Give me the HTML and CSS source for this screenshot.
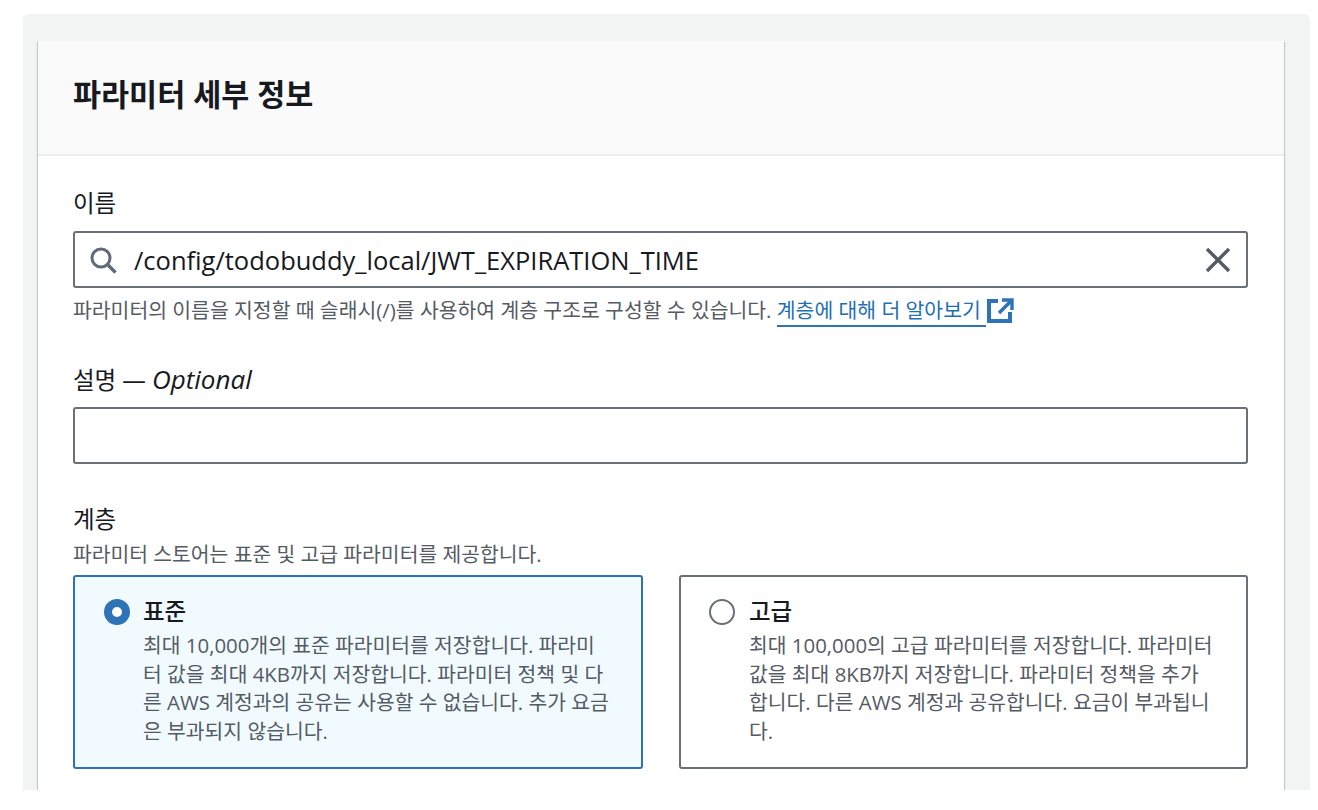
FILE: index.html
```html
<!DOCTYPE html>
<html lang="ko">
<head>
    <meta charset="UTF-8">
    <meta name="viewport" content="width=device-width, initial-scale=1.0">
    <title>파라미터 세부 정보</title>
    <link rel="stylesheet" href="styles.css">
</head>
<body>
    <div class="panel">
        <div class="card">
            <div class="card-header">
                <h2 class="card-title">파라미터 세부 정보</h2>
            </div>
            <div class="card-body">
                <div class="form-field field-name">
                    <div class="label">이름</div>
                    <div class="input input-search">
                        <svg class="icon-search" width="28" height="28" viewBox="0 0 28 28" fill="none">
                            <circle cx="12" cy="12" r="9" stroke="#5f6b7a" stroke-width="3"/>
                            <path d="M18 18l8.500 8.500" stroke="#5f6b7a" stroke-width="3.400"/>
                        </svg>
                        <span class="input-value">/config/todobuddy_local/JWT_EXPIRATION_TIME</span>
                        <svg class="icon-clear" width="28" height="28" viewBox="0 0 28 28" fill="none">
                            <path d="M3 3l22 22M25 3L3 25" stroke="#545b64" stroke-width="3.400"/>
                        </svg>
                    </div>
                    <div class="hint hint-name">파라미터의 이름을 지정할 때 슬래시(/)를 사용하여 계층 구조로 구성할 수 있습니다. <a class="link" href="#">계층에 대해 더 알아보기 </a><svg class="icon-external" width="28" height="26" viewBox="0 0 28 26" fill="none">
                            <path d="M12 3H3v20h21v-9" stroke="#2e73b8" stroke-width="4"/>
                            <path d="M13 15L25 3M16 2h10v10" stroke="#2e73b8" stroke-width="3.400"/>
                        </svg>
                    </div>
                </div>

                <div class="form-field field-desc">
                    <div class="label">설명 — <em>Optional</em></div>
                    <div class="input"></div>
                </div>

                <div class="form-field field-tier">
                    <div class="label label-tier">계층</div>
                    <div class="hint hint-tier">파라미터 스토어는 표준 및 고급 파라미터를 제공합니다.</div>
                    <div class="tiles">
                        <div class="tile tile-selected">
                            <span class="radio radio-on"></span>
                            <div class="tile-text">
                                <div class="tile-title">표준</div>
                                <div class="tile-desc">최대 10,000개의 표준 파라미터를 저장합니다. 파라미<br>터 값을 최대 4KB까지 저장합니다. 파라미터 정책 및 다<br>른 AWS 계정과의 공유는 사용할 수 없습니다. 추가 요금<br>은 부과되지 않습니다.</div>
                            </div>
                        </div>
                        <div class="tile">
                            <span class="radio"></span>
                            <div class="tile-text">
                                <div class="tile-title">고급</div>
                                <div class="tile-desc">최대 100,000의 고급 파라미터를 저장합니다. 파라미터<br>값을 최대 8KB까지 저장합니다. 파라미터 정책을 추가<br>합니다. 다른 AWS 계정과 공유합니다. 요금이 부과됩니<br>다.</div>
                            </div>
                        </div>
                    </div>
                </div>
            </div>
        </div>
    </div>
</body>
</html>
```

FILE: styles.css
```css
html, body {
    height: 100%;
}
body {
    margin: 0;
    background: #fff;
    color: #16191f;
    font-family: "Open Sans", "Noto Sans CJK KR", sans-serif;
    overflow: hidden;
}
.panel {
    height: 776px;
    margin: 14px 8px 0 23px;
    padding: 27px 26px 0 15px;
    box-sizing: border-box;
    background: #f2f3f3;
    border-radius: 6px 6px 0 0;
    overflow: hidden;
}
.card {
    background: #fff;
    height: 780px;
    box-shadow: 0 1px 1px 0 rgba(0, 28, 36, 0.3), 1px 1px 1px 0 rgba(0, 28, 36, 0.15), -1px 1px 1px 0 rgba(0, 28, 36, 0.15);
}
.card-header {
    height: 115px;
    box-sizing: border-box;
    padding: 32px 35px 0;
    background: #fafafa;
    border-bottom: 2px solid #eaeded;
}
.card-title {
    margin: 0;
    font-size: 30.500px;
    line-height: 42px;
    font-weight: 700;
}
.card-body {
    padding: 30px 36px 0 35px;
}
.label {
    font-size: 23.500px;
    line-height: 34px;
    margin-bottom: 11px;
}
.label em {
    font-style: italic;
    font-size: 26px;
}
.label-tier {
    margin-bottom: 0;
}
.input {
    height: 57px;
    box-sizing: border-box;
    border: 2px solid #687078;
    border-radius: 3px;
    display: flex;
    align-items: center;
}
.input-search {
    padding: 0 14px;
}
.icon-search {
    flex: none;
}
.input-value {
    flex: 1;
    margin-left: 17px;
    font-size: 25.500px;
}
.icon-clear {
    flex: none;
}
.hint {
    color: #545b64;
    font-size: 20.450px;
    line-height: 30px;
}
.hint-name {
    margin-top: 7px;
}
.link {
    color: #1f6fb5;
    text-decoration: none;
    border-bottom: 2px solid #2e73b8;
    padding-bottom: 1px;
}
.icon-external {
    margin-left: 0;
    vertical-align: -6px;
}
.field-desc {
    margin-top: 37px;
}
.field-desc .label {
    margin-bottom: 10px;
}
.field-tier {
    margin-top: 38px;
}
.hint-tier {
    margin-top: 3px;
    margin-bottom: 6px;
    font-size: 20.400px;
}
.tiles {
    display: grid;
    grid-template-columns: 570px 569px;
    column-gap: 36px;
}
.tile {
    height: 194px;
    box-sizing: border-box;
    border: 2px solid #687078;
    border-radius: 3px;
    padding: 20px 10px 0 28px;
    display: flex;
}
.tile-selected {
    background: #f1faff;
    border-color: #2e73b8;
}
.radio {
    flex: none;
    width: 26px;
    height: 26px;
    box-sizing: border-box;
    border: 2px solid #687078;
    border-radius: 50%;
    margin-top: 2px;
    background: #fff;
}
.radio-on {
    border: 8px solid #2e73b8;
    margin-left: 1px;
    margin-right: -1px;
}
.tile-text {
    margin-left: 14px;
}
.tile-title {
    font-size: 23.500px;
    line-height: 29px;
    font-weight: 500;
    margin-bottom: 5px;
}
.tile-desc {
    color: #545b64;
    font-size: 20.400px;
    line-height: 28.500px;
    white-space: nowrap;
}
```
